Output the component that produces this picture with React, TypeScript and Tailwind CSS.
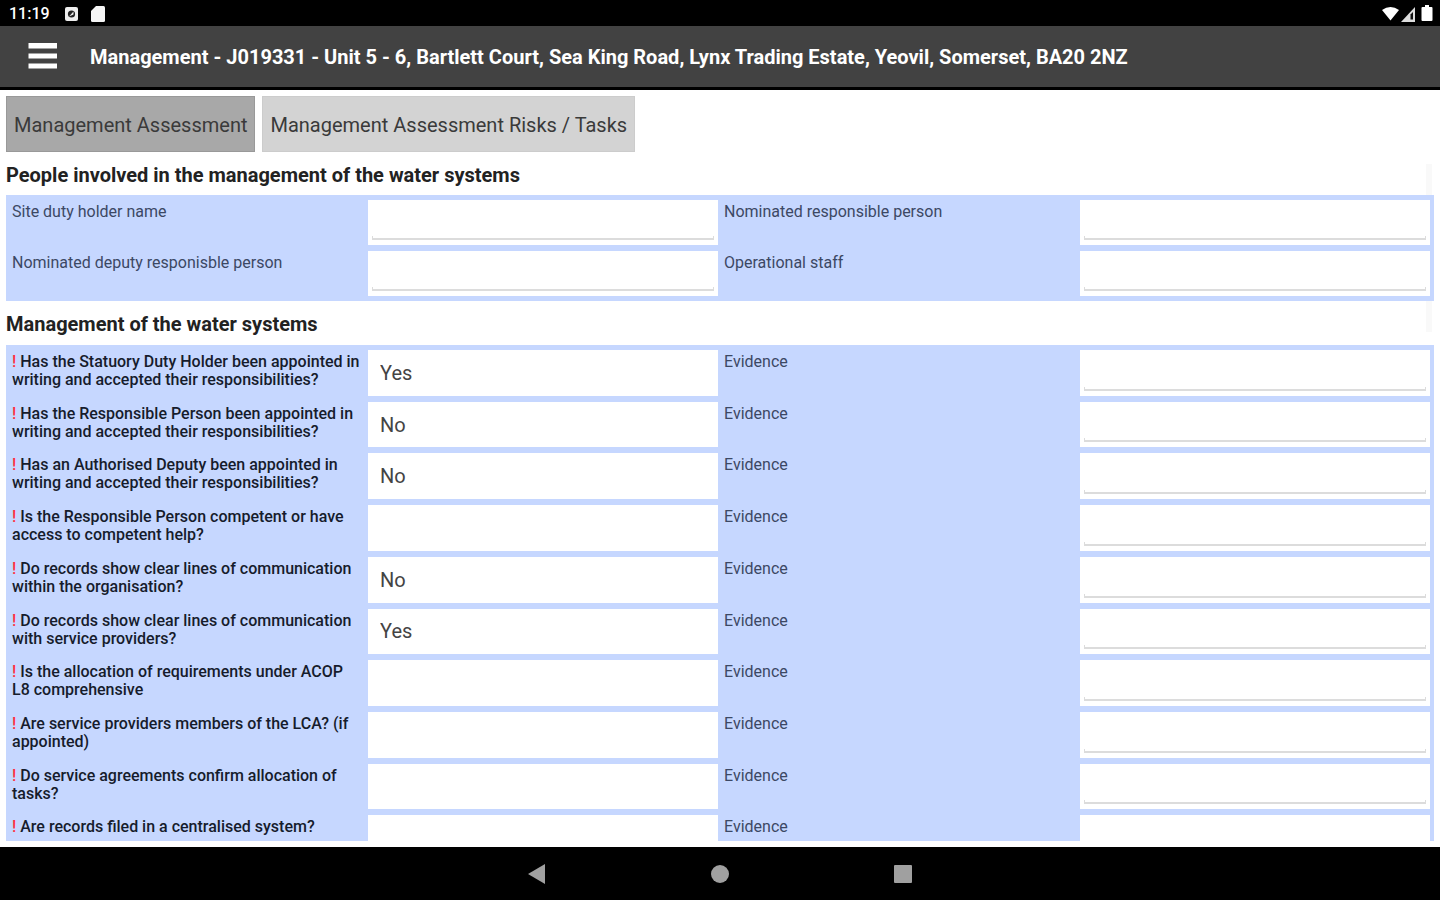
import React, { useState } from 'react';

interface FieldProps {
  id: string;
  label: string;
}

interface QuestionProps extends FieldProps {
  value: string;
  onChange: (value: string) => void;
}

const people = [
  ['Site duty holder name', 'Nominated responsible person'],
  ['Nominated deputy responisble person', 'Operational staff']
];

const questions = [
  { text: 'Has the Statuory Duty Holder been appointed in writing and accepted their responsibilities?', answer: 'Yes' },
  { text: 'Has the Responsible Person been appointed in writing and accepted their responsibilities?', answer: 'No' },
  { text: 'Has an Authorised Deputy been appointed in writing and accepted their responsibilities?', answer: 'No' },
  { text: 'Is the Responsible Person competent or have access to competent help?', answer: '' },
  { text: 'Do records show clear lines of communication within the organisation?', answer: 'No' },
  { text: 'Do records show clear lines of communication with service providers?', answer: 'Yes' },
  { text: 'Is the allocation of requirements under ACOP L8 comprehensive', answer: '' },
  { text: 'Are service providers members of the LCA? (if appointed)', answer: '' },
  { text: 'Do service agreements confirm allocation of tasks?', answer: '' },
  { text: 'Are records filed in a centralised system?', answer: '' }
];

const tabs = ['Management Assessment', 'Management Assessment Risks / Tasks'];

const StatusBar: React.FC = () => (
  <div className="flex h-[26px] shrink-0 items-center bg-black pt-[2px] pr-[6px] pl-[9px] text-white">
    <span className="text-[16px] leading-5 font-medium">11:19</span>
    <svg className="ml-[15px] h-[14px] w-[13px]" viewBox="0 0 13 14" fill="none">
      <rect width="13" height="14" rx="2" fill="#eee" />
      <circle cx="6.500" cy="7" r="3.600" fill="#222" />
      <path d="M4 9.500 8.500 4.500v3z" fill="#eee" />
    </svg>
    <svg className="ml-[13px] h-4 w-[14px]" viewBox="0 0 14 16">
      <path d="M5 0h7.500Q14 0 14 1.500v13Q14 16 12.500 16h-11Q0 16 0 14.500V5z" fill="#f5f5f5" />
    </svg>
    <svg className="ml-auto h-[18px] w-[52px]" viewBox="0 0 52 18" fill="#fff">
      <path d="M0 5Q8.500-1 17 5L8.500 15.500z" />
      <path d="M19 17 33 2v15z" fill="#ddd" />
      <path d="M28.500 9.500 31 7v7.500h-2.500z" fill="#111" />
      <path d="M43 0h4v2h2.500q1 0 1 1v12q0 1-1 1h-9q-1 0-1-1V3q0-1 1-1H43z" />
    </svg>
  </div>
);

const Field: React.FC<FieldProps> = ({ id, label }) => (
  <div className="grid grid-cols-[356fr_350fr]">
    <label htmlFor={id} className="pt-[3px] pr-[5px] text-[16px] leading-[18px] text-[#3c4864]">
      {label}
    </label>
    {/* Underline with the small upturned ends of an Android text box */}
    <div className="relative bg-white after:pointer-events-none after:absolute after:inset-x-[4px] after:bottom-[5px] after:h-1 after:border-x after:border-b-2 after:border-[#dcdcdc]">
      <input id={id} type="text" className="h-full w-full bg-transparent px-3 text-[20px] text-[#444] outline-none" />
    </div>
  </div>
);

const Question: React.FC<QuestionProps> = ({ id, label, value, onChange }) => (
  <div className="grid grid-cols-[356fr_350fr]">
    <label htmlFor={id} className="pt-[3px] pr-[5px] text-[16px] leading-[18px] font-medium text-[#161c2c]">
      <span className="text-[#ff3040]">!</span> {label}
    </label>
    <select
      id={id}
      value={value}
      onChange={(e) => onChange(e.target.value)}
      className="h-full w-full appearance-none bg-white px-3 text-[20px] text-[#444] outline-none"
    >
      <option value=""></option>
      <option value="Yes">Yes</option>
      <option value="No">No</option>
    </select>
  </div>
);

const App: React.FC = () => {
  const [activeTab, setActiveTab] = useState(0);
  const [answers, setAnswers] = useState(questions.map((q) => q.answer));

  const setAnswer = (index: number, value: string) => {
    setAnswers(answers.map((answer, i) => (i === index ? value : answer)));
  };

  return (
    <div className="flex h-screen flex-col bg-white font-['Roboto',sans-serif]">
      <StatusBar />

      <header className="flex h-16 shrink-0 items-center border-b-3 border-black bg-[#424242] pl-7 text-white">
        <button type="button" aria-label="Menu">
          <svg className="h-[27px] w-[30px]" viewBox="0 0 30 27" fill="#fff">
            <rect x="0.500" y="0" width="28.500" height="5.500" />
            <rect x="0.500" y="10.500" width="28.500" height="5" />
            <rect x="0.500" y="20.500" width="28.500" height="5" />
          </svg>
        </button>
        <h1 className="ml-8 text-[20px] leading-7 font-bold">
          Management - J019331 - Unit 5 - 6, Bartlett Court, Sea King Road, Lynx Trading Estate, Yeovil, Somerset, BA20 2NZ
        </h1>
      </header>

      <main className="relative isolate mb-[6px] min-h-0 flex-1 overflow-hidden px-[6px] pt-[6px]">
        {/* Scroll track, hidden behind the panels */}
        <div className="absolute top-[74px] right-2 -z-10 h-[168px] w-[6px] bg-[#f9f9f9]" />

        <div className="flex gap-[7px]">
          {tabs.map((tab, index) => (
            <button
              key={tab}
              type="button"
              onClick={() => setActiveTab(index)}
              className={`h-14 border px-[7px] pt-[2px] text-[20px] leading-7 text-[#3a3a3a] ${
                index === activeTab ? 'border-[#999] bg-[#a8a8a8]' : 'border-[#ccc] bg-[#d3d3d3]'
              }`}
            >
              {tab}
            </button>
          ))}
        </div>

        <h2 className="pt-[9px] pb-[6px] text-[20px] leading-7 font-bold text-[#222]">
          People involved in the management of the water systems
        </h2>
        <div className="grid min-h-[106px] auto-rows-fr gap-[6px] bg-[#c6d7ff] py-[5px] pr-1 pl-[6px]">
          {people.map(([left, right], index) => (
            <div key={left} className="grid grid-cols-2 gap-[6px]">
              <Field id={`person-${index}-left`} label={left} />
              <Field id={`person-${index}-right`} label={right} />
            </div>
          ))}
        </div>

        <h2 className="pt-[9px] pb-[7px] text-[20px] leading-7 font-bold text-[#222]">
          Management of the water systems
        </h2>
        <div className="grid min-h-[521px] auto-rows-fr gap-[6px] bg-[#c6d7ff] py-[5px] pr-1 pl-[6px]">
          {questions.map((question, index) => (
            <div key={question.text} className="grid grid-cols-2 gap-[6px]">
              <Question
                id={`question-${index}`}
                label={question.text}
                value={answers[index]}
                onChange={(value) => setAnswer(index, value)}
              />
              <Field id={`evidence-${index}`} label="Evidence" />
            </div>
          ))}
        </div>
      </main>

      <nav className="flex h-[53px] shrink-0 items-center justify-center gap-[163px] bg-black">
        <button type="button" aria-label="Back">
          <svg className="h-5 w-5" viewBox="0 0 20 20" fill="#a0a0a0">
            <path d="M1 10 18 0v20z" />
          </svg>
        </button>
        <button type="button" aria-label="Home">
          <svg className="h-5 w-5" viewBox="0 0 20 20" fill="#a0a0a0">
            <circle cx="10" cy="10" r="9" />
          </svg>
        </button>
        <button type="button" aria-label="Overview">
          <svg className="h-5 w-5" viewBox="0 0 20 20" fill="#a0a0a0">
            <rect x="1" y="1" width="18" height="18" rx="1" />
          </svg>
        </button>
      </nav>
    </div>
  );
};

export default App;
